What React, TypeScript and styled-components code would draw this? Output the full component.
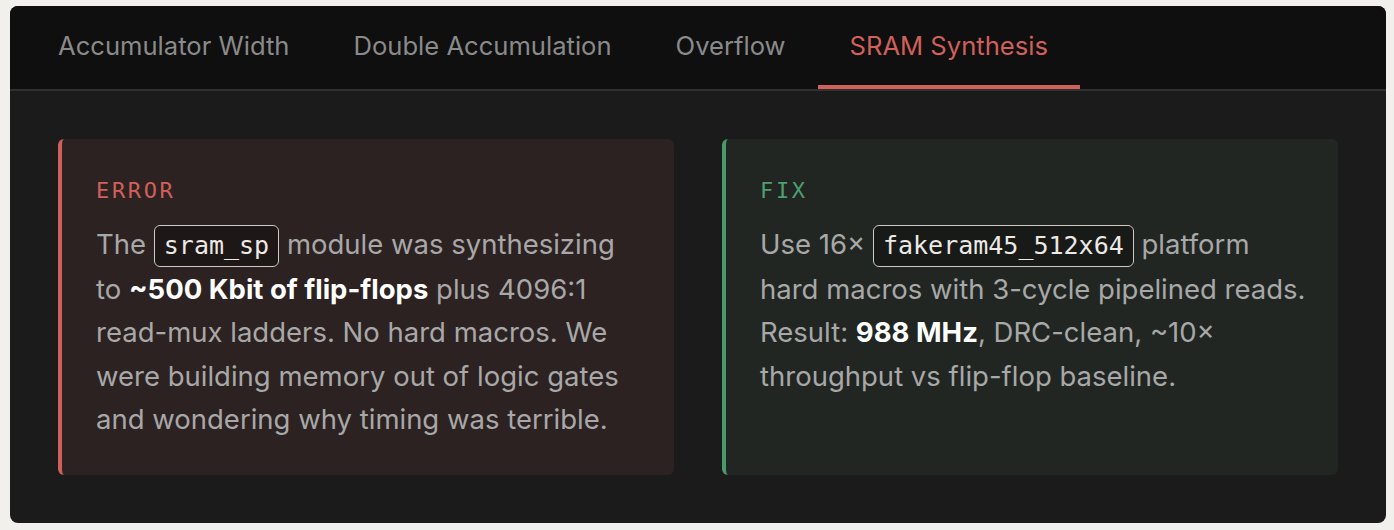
import React from "react";
import styled, { createGlobalStyle } from "styled-components";

const GlobalStyle = createGlobalStyle`
  body {
    margin: 0;
    background: #f1f0ec;
    font-family: Inter, "Noto Sans", sans-serif;
  }
`;

const tabs = ["Accumulator Width", "Double Accumulation", "Overflow", "SRAM Synthesis"];

const Panel = styled.div`
  margin: 6px 8px 0 10px;
  height: 517px;
  background: #1b1b1b;
  border-radius: 8px;
  overflow: hidden;
  display: flex;
  flex-direction: column;
`;

const TabBar = styled.div`
  display: flex;
  padding: 0 16px;
  background: #0f0f0f;
  border-bottom: 2px solid #303030;
`;

const Tab = styled.div<{ $active?: boolean }>`
  padding: 24px 32px 23px;
  font-size: 25.6px;
  line-height: 32px;
  color: ${(p) => (p.$active ? "#d0605a" : "#8a8a8a")};
  border-bottom: 4px solid ${(p) => (p.$active ? "#d0605a" : "transparent")};
  cursor: pointer;
`;

const Body = styled.div`
  flex: 1;
  display: grid;
  grid-template-columns: 1fr 1fr;
  gap: 48px;
  padding: 48px;
`;

const Card = styled.div<{ $tone: "error" | "fix" }>`
  background: ${(p) => (p.$tone === "error" ? "#2c2221" : "#212622")};
  border-left: 4px solid ${(p) => (p.$tone === "error" ? "#cf605a" : "#4a9a6a")};
  border-radius: 6px;
  padding: 38px 30px 32px 34px;
`;

const Label = styled.div<{ $tone: "error" | "fix" }>`
  font-family: "DejaVu Sans Mono", monospace;
  font-size: 22px;
  line-height: 28px;
  letter-spacing: 0.12em;
  color: ${(p) => (p.$tone === "error" ? "#d0605a" : "#4f9e70")};
  margin-bottom: 18px;
`;

const Text = styled.p`
  margin: 0;
  font-size: 27.5px;
  line-height: 43.5px;
  color: #a8a8a8;

  strong {
    color: #fff;
    font-weight: 700;
  }
`;

const Code = styled.code`
  font-family: "DejaVu Sans Mono", monospace;
  font-size: 25px;
  color: #ece9e6;
  background: rgba(0, 0, 0, 0.3);
  border: 1.5px solid #cfcac5;
  border-radius: 6px;
  padding: 5px 9px 6px;
`;

export default function App() {
  return (
    <>
      <GlobalStyle />
      <Panel>
        <TabBar>
          {tabs.map((t) => (
            <Tab key={t} $active={t === "SRAM Synthesis"}>
              {t}
            </Tab>
          ))}
        </TabBar>
        <Body>
          <Card $tone="error">
            <Label $tone="error">ERROR</Label>
            <Text>
              The <Code>sram_sp</Code> module was synthesizing to{" "}
              <strong>~500 Kbit of flip-flops</strong> plus 4096:1 read-mux ladders. No hard
              macros. We were building memory out of logic gates and wondering why timing was
              terrible.
            </Text>
          </Card>
          <Card $tone="fix">
            <Label $tone="fix">FIX</Label>
            <Text>
              Use 16× <Code>fakeram45_512x64</Code> platform hard macros with 3-cycle pipelined
              reads. Result: <strong>988 MHz</strong>, DRC-clean, ~10× throughput vs flip-flop
              baseline.
            </Text>
          </Card>
        </Body>
      </Panel>
    </>
  );
}
